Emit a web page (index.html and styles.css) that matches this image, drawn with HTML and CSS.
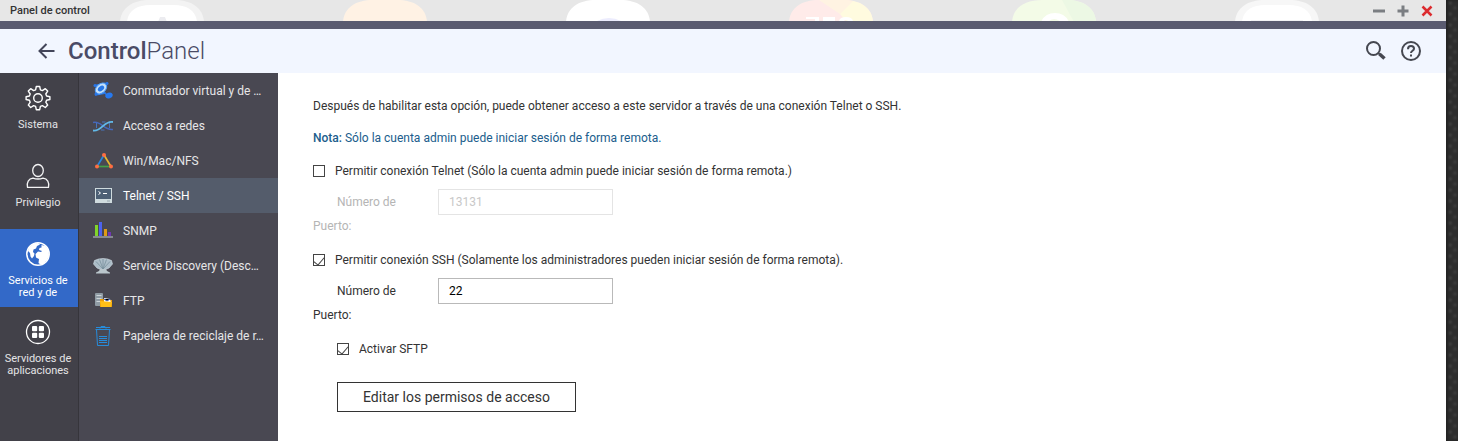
FILE: index.html
```html
<!DOCTYPE html>
<html lang="es">
<head>
<meta charset="utf-8">
<meta name="viewport" content="width=device-width, initial-scale=1">
<title>Panel de control</title>
<link rel="stylesheet" href="styles.css">
</head>
<body>
<div class="window">
  <header class="titlebar">
    <svg class="backdrop" width="1446" height="21" aria-hidden="true">
      <defs>
        <clipPath id="tile"><path d="M0 22C1 8 12 0 30 0H54C72 0 83 8 84 22Z"/></clipPath>
      </defs>
      <g transform="translate(120 0)" clip-path="url(#tile)"><path fill="#f3f3f3" d="M0 0h84v22H0z"/><path fill="#fff" d="M7 22C8 10 18 5 30 5H54C66 5 76 10 77 22Z"/><path fill="#ececf0" d="M38 22l2-5h5l2 5z"/></g>
      <g transform="translate(343 0)" clip-path="url(#tile)"><path fill="#fff2e4" d="M0 0h84v22H0z"/></g>
      <g transform="translate(566 0)" clip-path="url(#tile)"><path fill="#fff" d="M0 0h84v22H0z"/><path fill="#ececfd" d="M29 22q14-8 28 0z"/></g>
      <g transform="translate(789 0)" clip-path="url(#tile)"><path fill="#ffebe9" d="M0 0h84v22H0z"/><path fill="#fff3e2" d="M30 0h35L51 14z"/><path fill="#fffbdf" d="M65 0h19v22H58l-7-8z"/><path fill="#fff" d="M17 17h13v5h-4v-3h-9zM34 17h12v5H34zM50 22q0-5 7-5t7 5h-4q-3-4-6 0z"/></g>
      <g transform="translate(1012 0)" clip-path="url(#tile)"><path fill="#f3fbe7" d="M0 0h84v22H0z"/><path fill="#ecf8e4" d="M50 0h34v22H62z"/><path fill="#fff" d="M29 22q4-9 14-9t14 9h-8q-7-6-13 0z"/></g>
      <g transform="translate(1235 0)" clip-path="url(#tile)"><path fill="#f7f7f7" d="M0 0h84v22H0z"/><path fill="#fff" d="M7 22C8 10 18 5 30 5H54C66 5 76 10 77 22Z"/><path fill="#f3f3f5" d="M16 20h52v2H16z"/></g>
    </svg>
    <span class="titlebar-text">Panel de control</span>
    <div class="window-buttons">
      <button type="button" aria-label="Minimizar"><svg width="12" height="12"><path d="M0 4.500h12v3H0z" fill="#7b7e82"/></svg></button>
      <button type="button" aria-label="Maximizar"><svg width="12" height="12"><path d="M0.500 4.500h4v-4h3v4h4v3h-4v4h-3v-4h-4z" fill="#7b7e82"/></svg></button>
      <button type="button" aria-label="Cerrar"><svg width="12" height="12"><path d="M1.500 1.500l9 9M10.500 1.500l-9 9" stroke="#dc2b2f" stroke-width="2.500"/></svg></button>
    </div>
  </header>

  <div class="app-header">
    <button type="button" class="icon-button" aria-label="Atrás"><svg width="17" height="18" fill="none" stroke="#43455a" stroke-width="2"><path d="M16.500 9H2M8.500 2L1.500 9l7 7"/></svg></button>
    <h1 class="app-title"><b>Control</b>Panel</h1>
    <div class="tools">
      <button type="button" class="icon-button" aria-label="Buscar"><svg width="20" height="20" fill="none" stroke="#454750"><circle cx="7.500" cy="7.500" r="6.500" stroke-width="2"/><path d="M12 12l2 1.500" stroke-width="2"/><path d="M13.500 13l5 4.500" stroke-width="3.500"/></svg></button>
      <button type="button" class="icon-button" aria-label="Ayuda"><svg width="20" height="20" fill="none" stroke="#454750" stroke-width="2"><circle cx="10" cy="10" r="9"/><path d="M7 8.200C7 6 8.200 5 10 5s3 1.100 3 2.700c0 2-3 2.200-3 4.300"/><path d="M10 13.500v2"/></svg></button>
    </div>
  </div>

  <div class="body">
    <nav class="categories" aria-label="Categorías">
      <a class="category" href="#sistema">
        <svg width="26" height="26" viewBox="0 0 26 26" fill="none" stroke="#fff" stroke-width="1.400" stroke-linejoin="round"><path d="M11.300 1.500h3.400l.7 3.300 2 .8 2.900-1.900 2.400 2.400-1.900 2.900.8 2 3.300.7v2.800l-3.300.7-.8 2 1.900 2.900-2.400 2.400-2.900-1.900-2 .8-.7 3.300h-3.400l-.7-3.300-2-.8-2.900 1.900-2.400-2.400 1.900-2.900-.8-2-3.300-.7v-2.800l3.300-.7.800-2-1.900-2.900 2.400-2.400 2.900 1.900 2-.8z"/><circle cx="13" cy="13" r="4.300"/></svg>
        <span>Sistema</span>
      </a>
      <a class="category" href="#privilegio">
        <svg width="26" height="26" viewBox="0 0 26 26" fill="none" stroke="#f4f4f5" stroke-width="1.300"><ellipse cx="13" cy="7.500" rx="5.300" ry="6"/><path d="M2.500 24.400c-1-5 1-8.700 5.500-9.300q5 1.800 10 0c4.500.6 6.500 4.300 5.500 9.300z" stroke-linejoin="round"/></svg>
        <span>Privilegio</span>
      </a>
      <a class="category category-active" href="#red" aria-current="true">
        <svg width="26" height="26" viewBox="0 0 26 26"><circle cx="13" cy="13" r="11.200" fill="none" stroke="#fff" stroke-width="1.500"/><path fill="#fff" d="M5 5.500L9 2.500l4-.5 2 1.500-3 1.500-1 2.500-2.500 1-.5 2.500 1.500 1.500-.5 2.500-2 2.500-1.500-2-.5-3.500-2-2 .5-3.500zM16.500 4l4 1 3 4 .5 5-1.500 4.500-4 4.500-3 .5-2-1.500.5-4-3-1.500-.5-3.500 2.500-2.500 3 .5 1-1-3-1 .5-2 2-.5z"/></svg>
        <span>Servicios de red y de</span>
      </a>
      <a class="category" href="#aplicaciones">
        <svg width="26" height="26" viewBox="0 0 26 26" fill="#fff"><circle cx="13" cy="13" r="11.500" fill="none" stroke="#fff" stroke-width="1.300"/><rect x="7" y="7" width="5.200" height="5.200" rx="1"/><rect x="13.800" y="7" width="5.200" height="5.200" rx="1"/><rect x="7" y="13.800" width="5.200" height="5.200" rx="1"/><rect x="13.800" y="13.800" width="5.200" height="5.200" rx="1"/></svg>
        <span>Servidores de aplicaciones</span>
      </a>
    </nav>

    <nav class="services" aria-label="Servicios de red">
      <a class="service" href="#conmutador">
        <svg width="20" height="20"><path d="M2 4.500L15 2M2 14L13 12M3 4l11 10" stroke="#2976e8" stroke-width="1.500"/><ellipse cx="8" cy="7.500" rx="6.500" ry="4.500" fill="#c3e0fb" stroke="#4c9bf5" transform="rotate(-40 8 7.500)"/><ellipse cx="8" cy="7.500" rx="3.600" ry="2.300" fill="#2878e8" transform="rotate(-40 8 7.500)"/><circle cx="2" cy="4.500" r="1.500" fill="#2976e8"/><circle cx="3" cy="13" r="1.500" fill="#2976e8"/><circle cx="14" cy="2.500" r="1.500" fill="#2976e8"/><ellipse cx="16" cy="14.500" rx="3.800" ry="2.800" fill="#2779ef" transform="rotate(-20 16 14.500)"/></svg>
        <span>Conmutador virtual y de …</span>
      </a>
      <a class="service" href="#redes">
        <svg width="20" height="20" fill="none"><path d="M0 6.500C8 4 11 15 20 13.500" stroke="#4668bb" stroke-width="1.500"/><path d="M0 14.500C9 16 11 4 20 6" stroke="#62b9e8" stroke-width="1.800"/><path d="M9 6h3.500M8 14h3.500M3.500 7v5M16.500 7v5" stroke="#4874bd"/></svg>
        <span>Acceso a redes</span>
      </a>
      <a class="service" href="#nfs">
        <svg width="20" height="20" fill="none" stroke-width="1.700"><path d="M11 4L4 15.500" stroke="#2787df"/><path d="M11 4l7 11.500" stroke="#e8b62f"/><path d="M4 15.500h14" stroke="#43a047"/><g fill="#ff6d42"><circle cx="11" cy="4" r="2"/><circle cx="4" cy="15.500" r="2"/><circle cx="18" cy="15.500" r="2"/></g></svg>
        <span>Win/Mac/NFS</span>
      </a>
      <a class="service service-active" href="#telnet" aria-current="page">
        <svg width="20" height="20"><path fill="#cfdbde" d="M2 2h17v15H2z"/><path fill="#4d6075" d="M3 3h15v10H3z"/><path d="M5.500 5.500l2 1.500-2 1.500M10 7.500h4" fill="none" stroke="#fff"/><path d="M14 15h3" stroke="#97a6ae"/></svg>
        <span>Telnet / SSH</span>
      </a>
      <a class="service" href="#snmp">
        <svg width="20" height="20"><path fill="#80d52a" d="M2 4h3v11H2z"/><path fill="#4c62ed" d="M6 1h3v14H6z"/><path fill="#df9a16" d="M11 8h3v7h-3z"/><path fill="#7137b5" d="M15 11h3v4h-3z"/><path fill="#858991" d="M0 15h20v2H0z"/></svg>
        <span>SNMP</span>
      </a>
      <a class="service" href="#discovery">
        <svg width="20" height="20"><path fill="#acbdc8" stroke="#d5e1e8" stroke-width=".6" d="M10 14.500L4 12 .5 8l1-3.500L5.500 3 10 2.500l4.500.5 4 1.500 1 3.500L16 12z"/><path d="M10 13L3 5.500M10 13L6.500 3.500M10 13V3M10 13l3.500-9.500M10 13l7-7.500" stroke="#78909c" stroke-width=".8" fill="none"/><path fill="#bac6cc" d="M7 13h6l1 2 3 1.500v1H3v-1L6 15z"/></svg>
        <span>Service Discovery (Desc…</span>
      </a>
      <a class="service" href="#ftp">
        <svg width="20" height="20"><rect x="2" y="2" width="8" height="13" rx="1" fill="#8f9ba4"/><path d="M3.500 4.500h5M3.500 7.500h5M3.500 10.500h4" stroke="#ccd4d8"/><path fill="#e99d0c" d="M7 8h4l1 1h7v7H7z"/><path fill="#fff" d="M11 7l6 1 1 4h-7z"/><path d="M11 8l3 2 3-2" stroke="#4569c7"/><path fill="#ffbf18" d="M7 10l12 1-1 5H8z"/></svg>
        <span>FTP</span>
      </a>
      <a class="service" href="#papelera">
        <svg width="20" height="20" fill="none" stroke="#278cdb"><path d="M3.500 3.500l1 16h11l1-16zM2.500 3.500h15M7 2.500L8 .5h4l1 2M3 1.500h14M6 10.500h8M6 12.500h8M6 14.500h8M6 16.500h8"/></svg>
        <span>Papelera de reciclaje de r…</span>
      </a>
    </nav>

    <main class="content">
      <form class="form">
        <p class="line">Después de habilitar esta opción, puede obtener acceso a este servidor a través de una conexión Telnet o SSH.</p>
        <p class="line note"><b>Nota:</b> Sólo la cuenta admin puede iniciar sesión de forma remota.</p>
        <div class="group">
          <label class="check"><input type="checkbox"><span>Permitir conexión Telnet (Sólo la cuenta admin puede iniciar sesión de forma remota.)</span></label>
          <div class="field field-disabled"><label class="field-label" for="telnet-port">Número de Puerto:</label><input class="field-input" id="telnet-port" type="text" value="13131" disabled></div>
        </div>
        <div class="group">
          <label class="check"><input type="checkbox" checked><span>Permitir conexión SSH (Solamente los administradores pueden iniciar sesión de forma remota).</span></label>
          <div class="field"><label class="field-label" for="ssh-port">Número de Puerto:</label><input class="field-input" id="ssh-port" type="text" value="22"></div>
        </div>
        <div class="nested">
          <label class="check"><input type="checkbox" checked><span>Activar SFTP</span></label>
          <button type="button" class="action">Editar los permisos de acceso</button>
        </div>
      </form>
    </main>
  </div>
</div>
<div class="desktop" aria-hidden="true"></div>
</body>
</html>
```
FILE: styles.css
```css
* { box-sizing: border-box; }

body {
  display: flex;
  min-height: 100vh;
  margin: 0;
  font: 12px/16px Roboto, "Liberation Sans", sans-serif;
  color: #333;
  background: #fff;
}

svg { display: block; flex: none; }
button { font: inherit; cursor: pointer; }
a { color: inherit; text-decoration: none; }
b { font-weight: 500; }

.window {
  display: flex;
  flex: 1;
  flex-direction: column;
  min-width: 0;
}

.desktop {
  flex: none;
  width: 12px;
  background-color: #2e2e2e;
  background-image:
    radial-gradient(circle at 4px 3px, #424242 0, transparent 3px),
    radial-gradient(circle at 9px 8px, #3c3c3c 0, transparent 3px);
  background-size: 12px 11px;
  box-shadow: inset 2px 0 3px #222;
}

.titlebar {
  position: relative;
  display: flex;
  align-items: center;
  justify-content: space-between;
  height: 29px;
  padding: 0 13px 0 10px;
  overflow: hidden;
  background: #e7e7e7;
  border-bottom: 8px solid #5a5b70;
}

.backdrop { position: absolute; top: 0; left: 0; }

.titlebar-text {
  position: relative;
  font-size: 11px;
  font-weight: 500;
}

.window-buttons { position: relative; display: flex; gap: 12px; }
.window-buttons button,
.icon-button { padding: 0; border: 0; background: none; }

.app-header {
  display: flex;
  align-items: center;
  height: 44px;
  padding: 0 25px 0 38px;
  background: #f2f6ff;
}

.app-title {
  margin: 0 0 0 13px;
  font-size: 24px;
  font-weight: 300;
  line-height: 32px;
  color: #4a4b66;
}

.tools { display: flex; gap: 15px; margin-left: auto; }

.body { display: flex; flex: 1; }

.categories {
  flex: none;
  width: 79px;
  font-size: 11px;
  line-height: 12px;
  color: #e4e4e6;
  background: #424149;
  border-right: 1px solid #36353b;
}

.category {
  display: flex;
  flex-direction: column;
  align-items: center;
  gap: 8px;
  height: 78px;
  padding: 12px 3px 0 1px;
  text-align: center;
}

.category-active { color: #fff; background: #3369c8; }

.services {
  flex: none;
  width: 199px;
  color: #e6e6e8;
  background: #494852;
}

.service {
  display: flex;
  align-items: center;
  gap: 10px;
  height: 35px;
  padding: 0 8px 0 14px;
  white-space: nowrap;
}

.service-active { color: #fff; background: #545c6b; }

.content { flex: 1; min-width: 0; background: #fff; }

.form { padding: 25px 35px 0; }

.line { margin: 0 0 16px; }
.note { margin-bottom: 17px; color: #205d8c; }

.group { margin-bottom: 14px; }

.check {
  display: flex;
  align-items: center;
  gap: 10px;
}

.check input {
  display: grid;
  flex: none;
  place-items: center;
  width: 12px;
  height: 12px;
  margin: 0;
  appearance: none;
  background: #fff;
  border: 1px solid #444;
}

.check input:checked::before {
  width: 5px;
  height: 9px;
  margin-bottom: 2px;
  content: "";
  border: solid #444;
  border-width: 0 1px 1px 0;
  transform: rotate(40deg);
}

.field {
  display: flex;
  align-items: flex-start;
  gap: 25px;
  margin-top: 10px;
}

.field-disabled { color: #b5b5b5; }

.field-label {
  width: 100px;
  padding: 1px 16px 0 0;
  line-height: 24px;
  text-indent: 24px;
}

.field-input {
  width: 175px;
  height: 26px;
  padding: 0 10px;
  font: inherit;
  color: #000;
  background: #fff;
  border: 1px solid #b9b9b9;
}

.field-input:disabled { color: #c8c8c8; border-color: #e4e4e4; }

.nested { padding: 0 24px; }

.action {
  width: 239px;
  height: 30px;
  margin-top: 25px;
  padding: 0;
  font-size: 14px;
  color: #333;
  background: #fff;
  border: 1px solid #333;
}
```
